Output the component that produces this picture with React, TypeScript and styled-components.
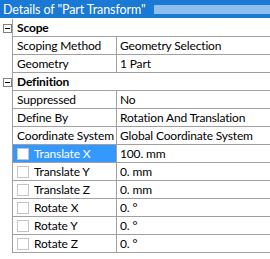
import React from "react";
import styled, { createGlobalStyle } from "styled-components";

const Global = createGlobalStyle`
  html, body { margin: 0; padding: 0; background: #ffffff; }
  body { font-family: Lato, "Noto Sans", sans-serif; font-size: 12px; color: #000; letter-spacing: -0.15px; }
`;

const Panel = styled.div`
  width: 270px;
  height: 259px;
  background: #fff;
  overflow: hidden;
  display: flex;
  flex-direction: column;
`;

const TitleBar = styled.div`
  height: 18px;
  background: #1979d4;
  color: #fff;
  display: flex;
  align-items: center;
  padding-left: 3px;
  gap: 8px;
  font-size: 12.5px;
  letter-spacing: -0.1px;
  white-space: nowrap;
`;

const Grip = styled.div`
  flex: 1;
  height: 9px;
  background-image: radial-gradient(circle, rgba(150, 196, 240, 1) 0.7px, transparent 0.8px);
  background-size: 2px 2px;
`;

const Table = styled.div`
  margin-top: 1px;
  display: flex;
  flex-direction: column;
`;

const Row = styled.div`
  display: grid;
  grid-template-columns: 13px 104px 1fr;
  height: 18px;
`;

const Gutter = styled.div`
  border-right: 1px solid #a0a0a0;
  display: flex;
  align-items: center;
  justify-content: flex-start;
  padding-left: 3px;
  box-sizing: border-box;
`;

const Toggle = styled.div`
  width: 9px;
  height: 9px;
  box-sizing: border-box;
  border: 1px solid #808080;
  background: #fff;
  position: relative;
  &::after {
    content: "";
    position: absolute;
    left: 1px;
    right: 1px;
    top: 3px;
    height: 1px;
    background: #000;
  }
`;

const HeaderCell = styled.div`
  grid-column: 2 / 4;
  border-bottom: 1px solid #a0a0a0;
  display: flex;
  align-items: center;
  padding-left: 4px;
  font-weight: bold;
`;

const LabelCell = styled.div<{ $selected?: boolean }>`
  border-bottom: 1px solid #a0a0a0;
  border-right: 1px solid #a0a0a0;
  display: flex;
  align-items: center;
  gap: 5px;
  padding-left: 4px;
  white-space: nowrap;
  overflow: hidden;
  background: ${(p) => (p.$selected ? "#3399ff" : "#fff")};
  color: ${(p) => (p.$selected ? "#fff" : "#000")};
`;

const ValueCell = styled.div`
  border-bottom: 1px solid #a0a0a0;
  display: flex;
  align-items: center;
  padding-left: 3px;
  white-space: nowrap;
  overflow: hidden;
`;

const Check = styled.span`
  width: 12px;
  height: 12px;
  box-sizing: border-box;
  border: 1px solid #c4c4c4;
  background: #fff;
  flex: none;
`;

type Item = { label: string; value: string; check?: boolean; selected?: boolean };
type Group = { title: string; items: Item[] };

const groups: Group[] = [
  {
    title: "Scope",
    items: [
      { label: "Scoping Method", value: "Geometry Selection" },
      { label: "Geometry", value: "1 Part" },
    ],
  },
  {
    title: "Definition",
    items: [
      { label: "Suppressed", value: "No" },
      { label: "Define By", value: "Rotation And Translation" },
      { label: "Coordinate System", value: "Global Coordinate System" },
      { label: "Translate X", value: "100. mm", check: true, selected: true },
      { label: "Translate Y", value: "0. mm", check: true },
      { label: "Translate Z", value: "0. mm", check: true },
      { label: "Rotate X", value: "0. °", check: true },
      { label: "Rotate Y", value: "0. °", check: true },
      { label: "Rotate Z", value: "0. °", check: true },
    ],
  },
];

export default function App() {
  return (
    <>
      <Global />
      <Panel>
        <TitleBar>
          <span>Details of "Part Transform"</span>
          <Grip />
        </TitleBar>
        <Table>
          {groups.map((g) => (
            <React.Fragment key={g.title}>
              <Row>
                <Gutter>
                  <Toggle />
                </Gutter>
                <HeaderCell>{g.title}</HeaderCell>
              </Row>
              {g.items.map((it) => (
                <Row key={it.label}>
                  <Gutter />
                  <LabelCell $selected={it.selected}>
                    {it.check && <Check />}
                    {it.label}
                  </LabelCell>
                  <ValueCell>{it.value}</ValueCell>
                </Row>
              ))}
            </React.Fragment>
          ))}
        </Table>
      </Panel>
    </>
  );
}
